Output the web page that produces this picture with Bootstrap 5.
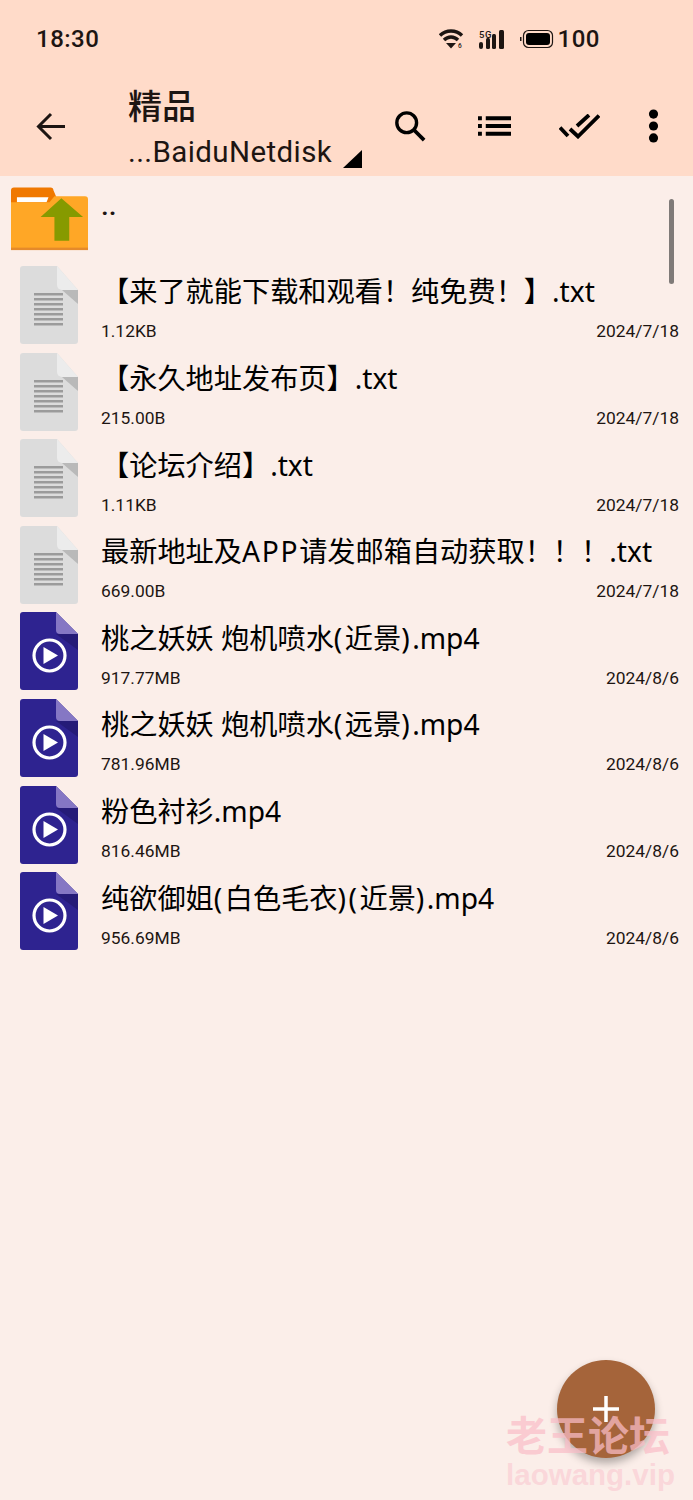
<!DOCTYPE html>
<html lang="zh-CN">

<head>
  <meta charset="UTF-8">
  <meta name="viewport" content="width=device-width, initial-scale=1.0">
  <title>精品</title>
  <link href="https://cdn.jsdelivr.net/npm/bootstrap@5.3.0/dist/css/bootstrap.min.css" rel="stylesheet">
  <style>
    body {
      width: 693px;
      height: 1500px;
      overflow: hidden;
      background: #fbeee9;
      color: #1d1512;
      font-family: Roboto, "Noto Sans CJK SC", sans-serif;
    }
    .app-page { position: relative; height: 1500px; overflow: hidden; }
    .app-head { background: #ffdbc9; height: 176px; }
    .status-row { height: 78px; padding: 0 93px 0 36px; font-size: 24px; font-weight: 500; letter-spacing: .5px; }
    .wifi-icon { margin-right: 15px; }
    .signal-icon { margin-right: 15px; }
    .tool-row { height: 96px; padding-left: 36px; }
    .back-btn { width: 92px; }
    .title-box { width: 266px; }
    .page-title { font-size: 34px; font-weight: 500; line-height: 44px; margin-top: 5px; }
    .page-path { font-size: 29.500px; line-height: 40px; letter-spacing: .4px; white-space: nowrap; margin-top: 3px; }
    .path-arrow { margin-left: 11px; margin-bottom: 3.500px; }
    .tool-icons { gap: 48px; }
    .search-icon { margin-right: 4px; }
    .file-row { height: 86.6px; }
    .up-row { height: 85.7px; }
    .icon-col { width: 101px; padding-left: 20px; flex: none; }
    .up-icon { margin-left: -9px; margin-top: 1px; display: block; }
    .up-name { font-size: 28px; line-height: 28px; margin-top: -26px; font-weight: 500; }
    .info-col { flex: 1; padding-right: 14px; min-width: 0; }
    .file-name { font-family: "Noto Sans", "Noto Sans CJK SC", sans-serif; font-size: 28.2px; line-height: 40px; white-space: nowrap; color: #000; margin-top: 5px; }
    .wide-paren { letter-spacing: 2.5px; }
    .wide-caps { letter-spacing: 1.7px; }
    .file-meta { font-size: 17.4px; line-height: 24px; margin-top: 8px; color: #1d1512; }
    .scroll-thumb { position: absolute; left: 669px; top: 199px; width: 5px; height: 85px; border-radius: 3px; background: #7f7a78; }
    .add-btn {
      position: absolute; left: 557px; top: 1360px; width: 98px; height: 98px; border-radius: 50%;
      background: #a5643a; box-shadow: 0 5px 9px rgba(0, 0, 0, .3);
    }
    .water-mark { position: absolute; left: 501px; top: 1408px; width: 174px; text-align: center; color: rgba(250, 190, 200, .72); font-weight: 700; pointer-events: none; }
    .water-cn { font-size: 41px; line-height: 50px; font-family: "Noto Sans CJK SC", sans-serif; }
    .water-en { font-size: 29.500px; line-height: 34px; padding-left: 5px; white-space: nowrap; font-family: "Liberation Sans", sans-serif; color: rgba(250, 195, 205, .55); }
  </style>
</head>

<body>
  <svg width="0" height="0" class="position-absolute">
    <symbol id="txt-icon" viewBox="0 0 58 78">
      <path d="M3 0H37L58 24V75a3 3 0 0 1-3 3H3a3 3 0 0 1-3-3V3a3 3 0 0 1 3-3z" fill="#dcdcdc"/>
      <path d="M37 0L58 24H42a5 5 0 0 1-5-5z" fill="#ececec"/>
      <path d="M42 24H58V38z" fill="#b9b9b9"/>
      <path d="M14 27h29v2.4H14zM14 32h29v2.4H14zM14 37h29v2.4H14zM14 42h29v2.4H14zM14 47h29v2.4H14zM14 52h29v2.4H14zM14 57h29v2.4H14z" fill="#9b9b9b"/>
    </symbol>
    <symbol id="mp4-icon" viewBox="0 0 58 78">
      <path d="M3 0H36L58 22V75a3 3 0 0 1-3 3H3a3 3 0 0 1-3-3V3a3 3 0 0 1 3-3z" fill="#2e2390"/>
      <path d="M36 22H58V38z" fill="#251b78"/>
      <path d="M36 0L58 22H40a4 4 0 0 1-4-4z" fill="#8577c4"/>
      <circle cx="29.500" cy="43.500" r="15.500" fill="none" stroke="#fff" stroke-width="3.200"/>
      <path d="M23.500 35L38 43.500L23.500 52z" fill="#fff"/>
    </symbol>
  </svg>

  <div class="app-page">
    <header class="app-head">
      <div class="status-row d-flex align-items-center">
        <span class="flex-grow-1">18:30</span>
        <svg width="25" height="24" viewBox="0 -2 25 24" class="wifi-icon">
          <path d="M1 6.500C7 .5 17 .5 23 6.500M5 11C9 7 15 7 19 11" fill="none" stroke="#1d1512" stroke-width="3.400"/>
          <path d="M7 14h10L12 19.500z" fill="#1d1512"/>
          <text x="19" y="19" font-size="6.500" font-family="Roboto" fill="#1d1512">6</text>
        </svg>
        <svg width="26" height="19" viewBox="0 0 26 19" class="signal-icon">
          <text x="0" y="8" font-size="9.500" font-family="Roboto" font-weight="500" fill="#1d1512">5G</text>
          <rect x="0" y="12" width="4" height="7" rx="2" fill="#1d1512"/>
          <rect x="7" y="8" width="4" height="11" rx="1.500" fill="#1d1512"/>
          <rect x="13" y="4" width="4" height="15" rx="1.500" fill="#1d1512"/>
          <rect x="20" y="0" width="5" height="19" rx="1.500" fill="#1d1512"/>
        </svg>
        <svg width="34" height="20" viewBox="0 0 34 20" class="me-1">
          <rect x="0" y="8" width="1.500" height="4" fill="#1d1512"/>
          <rect x="3.500" y="1.500" width="29" height="17" rx="5" fill="none" stroke="#1d1512" stroke-width="1.200"/>
          <rect x="6" y="4" width="24" height="12" rx="3" fill="#000"/>
        </svg>
        <span>100</span>
      </div>
      <div class="tool-row d-flex align-items-center">
        <div class="back-btn">
          <svg width="29" height="29" viewBox="0 0 29 29" class="d-block">
            <path d="M29 14.500H3M15 2L2.500 14.500L15 27" fill="none" stroke="#1d1512" stroke-width="3"/>
          </svg>
        </div>
        <div class="title-box">
          <div class="page-title">精品</div>
          <div class="page-path d-flex align-items-end">...BaiduNetdisk
            <svg width="19" height="19" viewBox="0 0 20 20" class="path-arrow"><path d="M20 0V19H0z" fill="#000"/></svg>
          </div>
        </div>
        <div class="tool-icons d-flex align-items-center">
          <svg width="32" height="32" viewBox="0 0 34 34" class="search-icon">
            <circle cx="13.500" cy="13.500" r="10.500" fill="none" stroke="#000" stroke-width="3.600"/>
            <path d="M21 21L32 32" stroke="#000" stroke-width="4"/>
          </svg>
          <svg width="33" height="20" viewBox="0 0 34 20">
            <path d="M0 0h4v4H0zM8 0h26v4H8zM0 8h4v4H0zM8 8h26v4H8zM0 16h4v4H0zM8 16h26v4H8z" fill="#000"/>
          </svg>
          <svg width="41" height="25" viewBox="0 0 41 25">
            <path d="M1 13.500L9 22M11 15L19 22.500L40 1.500M18 12L30 1" fill="none" stroke="#000" stroke-width="3.800"/>
          </svg>
          <svg width="11" height="36" viewBox="0 0 12 38">
            <circle cx="6" cy="6" r="5" fill="#000"/><circle cx="6" cy="19" r="5" fill="#000"/><circle cx="6" cy="32" r="5" fill="#000"/>
          </svg>
        </div>
      </div>
    </header>

    <main>
      <div class="up-row d-flex align-items-center">
        <div class="icon-col">
          <svg width="77" height="64" viewBox="0 0 78 64" class="up-icon">
            <path d="M0 3a3 3 0 0 1 3-3H40a3 3 0 0 1 3 3L46 10V30H0z" fill="#f07800"/>
            <path d="M6 10H38L36 15H6z" fill="#fff"/>
            <path d="M0 15H39L44 9H75a3 3 0 0 1 3 3V63H0z" fill="#ffa726"/>
            <rect x="0" y="61" width="78" height="2.500" fill="#e58a2a"/>
            <path d="M51 11L73 30H59V54H44V30H30z" fill="#869a00"/>
          </svg>
        </div>
        <div class="up-name">..</div>
      </div>
      <div id="fileList"></div>
    </main>

    <div class="scroll-thumb"></div>
    <div class="add-btn d-flex align-items-center justify-content-center">
      <svg width="26" height="26" viewBox="0 0 26 26"><path d="M13 0V26M0 13H26" stroke="#fff" stroke-width="3.500"/></svg>
    </div>
    <div class="water-mark">
      <div class="water-cn">老王论坛</div>
      <div class="water-en">laowang.vip</div>
    </div>
  </div>

  <script>
    const files = [
      ["【来了就能下载和观看！纯免费！】.txt", "1.12KB", "2024/7/18", "txt"],
      ["【永久地址发布页】.txt", "215.00B", "2024/7/18", "txt"],
      ["【论坛介绍】.txt", "1.11KB", "2024/7/18", "txt"],
      ["最新地址及APP请发邮箱自动获取！！！.txt", "669.00B", "2024/7/18", "txt"],
      ["桃之妖妖 炮机喷水(近景).mp4", "917.77MB", "2024/8/6", "mp4"],
      ["桃之妖妖 炮机喷水(远景).mp4", "781.96MB", "2024/8/6", "mp4"],
      ["粉色衬衫.mp4", "816.46MB", "2024/8/6", "mp4"],
      ["纯欲御姐(白色毛衣)(近景).mp4", "956.69MB", "2024/8/6", "mp4"]
    ];
    // parens and caps run wider in the original font
    const nameHtml = (name) => name
      .replace(/[()]/g, '<span class="wide-paren">$&</span>')
      .replace("APP", '<span class="wide-caps">APP</span>');
    document.getElementById("fileList").innerHTML = files.map(([name, size, date, type]) => `
      <div class="file-row d-flex align-items-center">
        <div class="icon-col">
          <svg width="58" height="78" class="d-block"><use href="#${type}-icon"/></svg>
        </div>
        <div class="info-col">
          <div class="file-name">${nameHtml(name)}</div>
          <div class="file-meta d-flex justify-content-between"><span>${size}</span><span>${date}</span></div>
        </div>
      </div>`).join("");
  </script>
  <script src="https://cdn.jsdelivr.net/npm/bootstrap@5.3.0/dist/js/bootstrap.bundle.min.js"></script>
</body>

</html>
